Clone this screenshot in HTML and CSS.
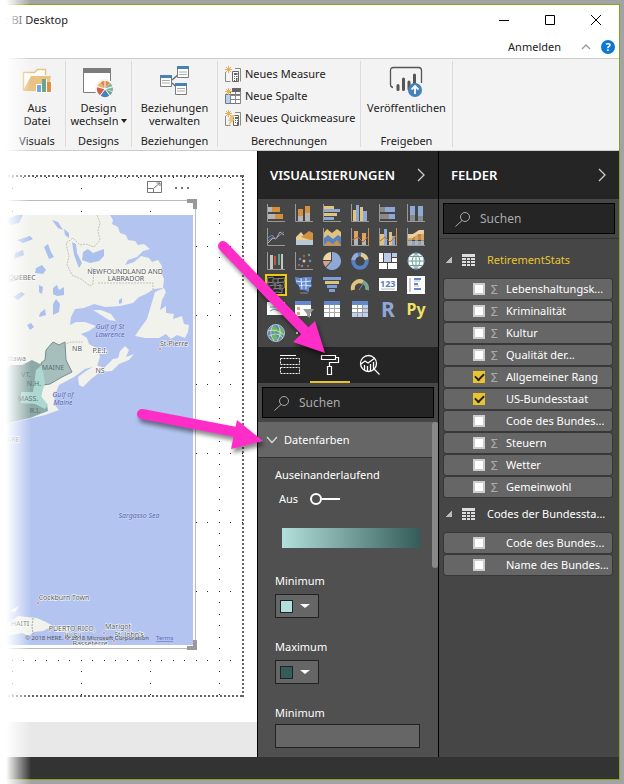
FILE: index.html
```html
<!DOCTYPE html>
<html lang="de">
<head>
<meta charset="utf-8">
<meta name="viewport" content="width=device-width, initial-scale=1">
<title>Power BI Desktop</title>
<link rel="stylesheet" href="styles.css">
</head>
<body>
<div class="app">
  <header class="titlebar">
    <span class="app-name">r BI Desktop</span>
    <div class="window-buttons">
      <button aria-label="Minimieren"><svg width="12" height="12" viewBox="0 0 12 12"><path d="M1 6.500h10" stroke="#000"/></svg></button>
      <button aria-label="Maximieren"><svg width="12" height="12" viewBox="0 0 12 12"><path d="M1.500 1.500h9v9h-9z" fill="none" stroke="#000"/></svg></button>
      <button aria-label="Schließen"><svg width="12" height="12" viewBox="0 0 12 12"><path d="M1 1l10 10M11 1L1 11" stroke="#000"/></svg></button>
    </div>
  </header>
  <div class="account-bar">
    <a href="#">Anmelden</a>
    <button aria-label="Menüband einklappen"><svg width="10" height="8" viewBox="0 0 10 8"><path d="M1 6l4-4 4 4" fill="none" stroke="#999" stroke-width="1.300"/></svg></button>
    <button class="help" aria-label="Hilfe">?</button>
  </div>

  <nav class="ribbon">
    <section class="group group-visuals">
      <button class="tool">
        <svg width="32" height="32" viewBox="0 0 32 32"><path d="M2.500 24V6.500h11l3-3h8V9" fill="#fff" stroke="#eac282" stroke-width="1.500"/><path d="M2 25L10 10h20l-2 10v5z" fill="#eac282"/><path d="M15 18h6v-5h5v3h5v11H15z" fill="#fff"/><path d="M16 19h4v7h-4z" fill="#7ca6d4"/><path d="M21 13h4v13h-4z" fill="#6aa58e"/><path d="M26 16h4v10h-4z" fill="#e38b45"/></svg>
        <span>Aus<br>Datei</span>
      </button>
      <h2>Visuals</h2>
    </section>
    <section class="group group-designs">
      <button class="tool">
        <svg width="32" height="32" viewBox="0 0 32 32"><path d="M1.500 3.500h27v23h-27z" fill="#fff" stroke="#7c7c7c"/><path d="M1 2h28v5H1z" fill="#7c7c7c"/><circle cx="23" cy="23" r="10" fill="#f3f3f3"/><path d="M23 23L18.300 16.500A8 8 0 0 1 27.700 16.500z" fill="#e38b45"/><path d="M23 23L28 16.800A8 8 0 0 1 30.600 25.500z" fill="#82b5a0"/><path d="M23 23L30.300 26.300A8 8 0 0 1 27.700 29.500z" fill="#6aa58e"/><path d="M23 23L27.700 29.500A8 8 0 0 1 18.300 29.500z" fill="#4681ba"/><path d="M23 23L18 29.200A8 8 0 0 1 15.400 20.500z" fill="#d75b3f"/><path d="M23 23L15.600 20A8 8 0 0 1 18.300 16.500z" fill="#e9b573"/><path d="M23 23V14M23 23l8.500-2.500M23 23l5.300 7.300M23 23l-5.300 7.300M23 23l-8.500-2.500" stroke="#fff"/></svg>
        <span>Design<br>wechseln<i class="caret"></i></span>
      </button>
      <h2>Designs</h2>
    </section>
    <section class="group group-relations">
      <button class="tool">
        <svg width="32" height="32" viewBox="0 0 32 32"><path d="M13 14l7-6M13 17l7 6" stroke="#6b6b6b" stroke-width="1.500"/><g fill="#fff" stroke="#7c7c7c"><path d="M18.500 .5h11v11h-11zM1.500 9.500h11v11h-11zM16.500 17.500h11v11h-11z"/></g><path d="M18 0h12v3H18zM1 9h12v3H1zM16 17h12v3H16z" fill="#4681ba"/><path d="M20 6h8M20 8.500h8M3 14.500h8M3 17h8M18 22.500h8M18 25h8" stroke="#aaa"/></svg>
        <span>Beziehungen<br>verwalten</span>
      </button>
      <h2>Beziehungen</h2>
    </section>
    <section class="group group-calc">
      <div class="small-tools">
        <button><svg width="16" height="16" viewBox="0 0 16 16"><path d="M.5 6v9.500h5M10 2.500h5.500v13" fill="none" stroke="#8a8a8a"/><path d="M7.500 5.500h6v10h-6z" fill="#fff" stroke="#666"/><path d="M9 7h3.500v2H9zM9 10h1v1H9zM11 10h1.500v1H11zM9 12h1v1H9zM11 12h1.500v3H11zM9 14h1v1H9z" fill="#666"/><path d="M3.500 0v7M0 3.500h7M1 1l5 5M6 1L1 6" stroke="#e8b056"/></svg><span>Neues Measure</span></button>
        <button><svg width="16" height="16" viewBox="0 0 16 16"><path d="M.5 6.500h15v9H.5z" fill="#fff" stroke="#777"/><path d="M1 7h4v8H1z" fill="#b5d2ee"/><path d="M7 0h9v4H7z" fill="#666"/><path d="M5.500 4v11M10.500 4v11M15.500 3v12M5 7.500h10M5 11.500h10" stroke="#888"/><path d="M3.500 0v7M0 3.500h7M1 1l5 5M6 1L1 6" stroke="#e8b056"/></svg><span>Neue Spalte</span></button>
        <button><svg width="16" height="16" viewBox="0 0 16 16"><path d="M.5 6v9.500h5M10 2.500h5.500v13" fill="none" stroke="#8a8a8a"/><path d="M8.500 5.500h5v10h-5z" fill="#fff" stroke="#666"/><path d="M10 7h3v2h-3zM10 10h1v1h-1zM12 10h1v1h-1zM10 12h1v1h-1zM12 12h1v3h-1z" fill="#666"/><path d="M6 5h4L8 9h2l-7 7 2-5H3z" fill="#eac282"/><path d="M3.500 0v7M0 3.500h7M1 1l5 5M6 1L1 6" stroke="#e8b056"/></svg><span>Neues Quickmeasure</span></button>
      </div>
      <h2>Berechnungen</h2>
    </section>
    <section class="group group-share">
      <button class="tool">
        <svg width="34" height="32" viewBox="0 0 34 32"><path d="M4 21.500Q1.500 21 1.500 18.500V4.500Q1.500 1.500 4.500 1.500h25Q32.500 1.500 32.500 4.500V17" fill="none" stroke="#555" stroke-width="1.300"/><path d="M9 19.500v4M14.500 13v10.500M20 16v7M25.500 9v10" stroke="#555" stroke-width="3" stroke-linecap="round"/><circle cx="26" cy="24" r="7" fill="#4681ba"/><path d="M26 28v-8M22.500 23.500l3.500-3.500 3.500 3.500" fill="none" stroke="#fff" stroke-width="1.800"/></svg>
        <span>Veröffentlichen</span>
      </button>
      <h2>Freigeben</h2>
    </section>
  </nav>

  <main class="workspace">
    <section class="canvas">
      <div class="report">
        <div class="page">
          <svg class="page-grid" width="100%" height="100%" aria-hidden="true">
            <defs><pattern id="dots" x="12" y="2" width="69" height="69" patternUnits="userSpaceOnUse"><path d="M0 0h1v1h-1zM0 11h1v1h-1zM0 23h1v1h-1zM0 34h1v1h-1zM0 46h1v1h-1zM0 57h1v1h-1zM11 0h1v1h-1zM23 0h1v1h-1zM34 0h1v1h-1zM46 0h1v1h-1zM57 0h1v1h-1z" fill="#222"/></pattern></defs>
            <rect width="100%" height="100%" fill="url(#dots)"/>
          </svg>
          <div class="visual-tools">
            <button aria-label="Fokusmodus"><svg width="15" height="13" viewBox="0 0 15 13"><path d="M.5 .5h14v11H.5zM.5 7.500h6v4M7 7l6-5M9.500 2H13v3" fill="none" stroke="#777"/></svg></button>
            <button aria-label="Weitere Optionen"><svg width="16" height="4" viewBox="0 0 16 4"><path d="M1 1h2v2H1zM7 1h2v2H7zM13 1h2v2h-2z" fill="#777"/></svg></button>
          </div>
          <div class="visual">
            <svg class="map" viewBox="0 0 193 430" role="img" aria-label="Karte">
              <path fill="#b3c4f0" d="M0 0h193v430H0z"/>
              <g fill="#f1f2ec">
                <path d="M0 0H110l3 5-1 4 6 3 2 6 6 2 2 5 7 1 3 4 6-1 6 5-7 2-6 6-9 3-3 5 9-3 7-6 8 2 3 4 6-2 4 6-1 6 3 7-1 9-9 1-8 5-7 3-6 6-13 3-15 1-11-3-10 4-9 1-4 8-1 8 6-3 9 0 11 4-7 5-8 3 6 4 2 6 9 5 2 8-3 9-12 3-11 8-15 8-4 10-1 9 5 6-14 5-34 8z"/>
                <path d="M79 170l-1-8 8-6 10-6 8 3 9-9 5-1 2-7 5-5 4 4-3 7 8-3-5 6-10 4-7 7-12 1-10 8-7 7z"/>
                <path d="M155 77l9-4 2 4-4 8-2 10 6-4 0 7 8 1-1 5 9-3 2 8 5 1-1 7-3 6-8-3-6 4-5-5-7 4-14 0-10-2 4-6 8-11zM93 95l8 0 10 4 5 7-7-1zM91 134l6 5 8 0 3-4-6 1-6-4zM0 409l12-3 6-5 19 2 9 4 7 4-10 5-9 1-5 4-7-3-15 3-7-4zM55 412h13l3 4-15 1zM9 396l10-5-4 6z"/>
              </g>
              <g fill="#abc0ed">
                <path d="M52 5l6 2 5 8-5-2zM64 14l5 4 0 5-4-3zM17 25l13-4 3 3-10 4zM44 32l4-3 3 8 3 5-5 2zM15 38l8-3 1 5-10 4zM36 53l6-3 4 5-3 4-8-1zM83 37l5-3 5 4 11-4 0 7-5 5-9 2-8-3zM90 52l8 4-4 3zM72 27l4 2 1 9 5 10-3 5-5-13zM53 73l4-3 2 5 5-3 0 8-7 1-4-2zM53 89l3-5 4 5-1 8-6 3zM39 70l4 2-1 7-3-2zM13 82l8-5 4 2-7 6zM40 98l5-4 1 6-7 2zM27 110l4-2 3 4-4 3zM119 85l3-2 0 5-3 1zM5 5l12-5h6l-4 8-9 2zM7 65l9-3 4 2-10 4z"/>
              </g>
              <path fill="#a6bfbd" stroke="#778c8b" d="M45 145l1-10 7-8 6 3 6-3 1 18 6 12-10 5-12 7-7 1-2-22z"/>
              <path fill="#8ca9a7" d="M10 150h12l10-5 10 5 0 13 1 9-3 14 7 3 1 7-18 7-30 7v-45z"/>
              <path fill="#acd8d1" d="M36 155l6-5 3 18-4 13 7 9-3 4-10-5-14-1v-11h12z"/>
              <g fill="none" stroke="#b2ad9d" stroke-width=".7" stroke-dasharray="2 1"><path d="M97 0l3 8-2 8 2 9-6 7-8-3-6 1-7-7-7 5 3 13-2 9 5 10 9 4 9 7 3-2 1-17M98 68h55v7M59 137l4-7 8-3 12 0"/><path stroke="#8e8b81" d="M33 403l-1 8 1 8"/></g>
              <g class="places">
                <text x="125" y="59">NEWFOUNDLAND AND</text><text x="126" y="66">LABRADOR</text>
                <text x="22" y="65">QUEBEC</text><text x="77" y="136">NB</text><text x="100" y="138">P.E.I.</text><text x="100" y="158">NS</text>
              </g>
              <g class="states">
                <text x="53" y="155">MAINE</text><text x="26" y="162">VT.</text><text x="34" y="171">N.H.</text><text x="28" y="186">MASS.</text><text x="35" y="198">R.I.</text></g>
              <g class="places"><text x="10" y="227">WARE</text><text x="20" y="411">HAITI</text><text x="72" y="416">PUERTO RICO,</text><text x="73" y="423">(U.S.)</text>
              </g>
              <g class="towns"><text x="174" y="131">St-Pierre</text><text x="14" y="146">Ottawa</text><text x="64" y="385">Cockburn Town</text><text x="118" y="414">Marigot</text><text x="129" y="422">St. John's</text><text x="90" y="431">Basseterre</text></g>
              <g class="waters"><text x="110" y="114">Gulf of St</text><text x="110" y="122">Lawrence</text><text x="63" y="182">Gulf of</text><text x="63" y="190">Maine</text><text x="139" y="303">Sargasso Sea</text></g>
              <path fill="#d0472d" stroke="#fff" stroke-width=".5" d="M159 133h2v2h-2zM37 387h2v2h-2zM103 417h2v2h-2zM113 425h2v2h-2zM106 423h2v2h-2z"/>
              <g class="credits"><text x="25" y="425">© 2018 HERE, © 2018 Microsoft Corporation</text><text x="156" y="425" text-decoration="underline" fill="#6a6ab8">Terms</text></g>
            </svg>
            <i class="handle handle-top"></i><i class="handle handle-mid"></i><i class="handle handle-bottom"></i>
          </div>
        </div>
      </div>
      <div class="page-tabs"></div>
    </section>

    <aside class="panel">
      <header class="panel-head"><h1>VISUALISIERUNGEN</h1><button aria-label="Einklappen"><svg width="8" height="14" viewBox="0 0 8 14"><path d="M1 1l6 6-6 6" fill="none" stroke="#ccc" stroke-width="1.300"/></svg></button></header>
      <div class="gallery">
        <button aria-label="Gestapelte Balken"><svg viewBox="0 0 18 18"><path d="M1 3h4v5H1zM1 10h7v5H1z" fill="#b5b5b5"/><path d="M5 3h8v5H5zM8 10h8v5H8z" fill="#d3913f"/><path class="axis" d="M.5 0v17.500H18"/></svg></button>
        <button aria-label="Gestapelte Säulen"><svg viewBox="0 0 18 18"><path d="M3 12h5v5H3zM10 9h5v8h-5z" fill="#b5b5b5"/><path d="M3 5h5v7H3zM10 2h5v7h-5z" fill="#d3913f"/><path class="axis" d="M.5 0v17.500H18"/></svg></button>
        <button aria-label="Gruppierte Balken"><svg viewBox="0 0 18 18"><path d="M1 2h10v3H1zM1 9h13v3H1z" fill="#dfc57b"/><path d="M1 5h16v3H1zM1 13h10v3H1z" fill="#8fa9d6"/><path class="axis" d="M.5 0v17.500H18"/></svg></button>
        <button aria-label="Gruppierte Säulen"><svg viewBox="0 0 18 18"><path d="M2 6h3v11H2zM9 3h3v14H9z" fill="#dfc57b"/><path d="M5 1h3v16H5zM12 7h4v10h-4z" fill="#8fa9d6"/><path class="axis" d="M.5 0v17.500H18"/></svg></button>
        <button aria-label="100 % Balken"><svg viewBox="0 0 18 18"><path d="M1 3h5v5H1zM1 10h9v5H1z" fill="#8a8a8a"/><path d="M6 3h10v5H6zM10 10h6v5h-6z" fill="#8fa9d6"/><path class="axis" d="M.5 0v17.500H18"/></svg></button>
        <button aria-label="100 % Säulen"><svg viewBox="0 0 18 18"><path d="M3 11h5v6H3zM11 12h5v5h-5z" fill="#8a8a8a"/><path d="M3 2h5v9H3zM11 2h5v10h-5z" fill="#8fa9d6"/><path class="axis" d="M.5 0v17.500H18"/></svg></button>

        <button aria-label="Linien"><svg viewBox="0 0 18 18"><path d="M1 15l5-5 3 1 4-7 4 3" fill="none" stroke="#d8aa96"/><path d="M1 10l4-3 4 4 4-4 4-3M1 13l6-5" fill="none" stroke="#6289ce"/><path class="axis" d="M.5 0v17.500H18"/></svg></button>
        <button aria-label="Flächen"><svg viewBox="0 0 18 18"><path d="M1 17V9l5-5 5 6 6-3v10z" fill="#e9cf93"/><path d="M6 9l8-6 4 2v8z" fill="#d3913f"/><path d="M1 12l17 0v5H1z" fill="#b6c9d4"/></svg></button>
        <button aria-label="Gestapelte Flächen"><svg viewBox="0 0 18 18"><path d="M0 6l4-5 5 4 5-4 4 3v13H0z" fill="#e0c47c"/><path d="M0 11l5-4 5 4 5-4 3 2v8H0z" fill="#5681c5"/><path d="M1 17l4-4 5 3 4-4 4 5z" fill="#d3913f"/><path class="axis" d="M.5 0v17.500H18"/></svg></button>
        <button aria-label="Linien und gestapelte Säulen"><svg viewBox="0 0 18 18"><path d="M3 9h4v8H3zM11 11h4v6h-4z" fill="#b5b5b5"/><path d="M3 3h4v8H3zM11 5h4v7h-4z" fill="#e1a45e"/><path d="M1 12l6-3 5 5 6-6" fill="none" stroke="#bd673d"/><path class="axis" d="M.5 0v17.500H18"/><path d="M17.500 0v17" stroke="#d3913f"/></svg></button>
        <button aria-label="Linien und gruppierte Säulen"><svg viewBox="0 0 18 18"><path d="M1 6h4v11H1zM10 4h3v13h-3z" fill="#dfc57b"/><path d="M5 1h3v16H5zM13 8h3v9h-3z" fill="#8fa9d6"/><path d="M1 13l5-4 5 5 6-6" fill="none" stroke="#bd673d"/><path class="axis" d="M.5 0v17.500H18"/><path d="M17.500 0v17" stroke="#d3913f"/></svg></button>
        <button aria-label="Menüband"><svg viewBox="0 0 18 18"><path d="M1 6h5l6-4h5v4h-5l-6 4H1z" fill="#ecd3a2"/><path d="M1 10h5l6-4h5v6H1z" fill="#c98540"/><path d="M1 13h16v4H1z" fill="#87a3d1"/><path d="M1 6h4v11H1zM8 5h3v12H8zM14 2h3v15h-3z" fill="#e2c891" opacity=".5"/><path class="axis" d="M.5 0v17.500H18"/></svg></button>

        <button aria-label="Wasserfall"><svg viewBox="0 0 18 18"><path d="M3 3h3v14H3zM14 2h2v15h-2z" fill="#c4c4c4"/><path d="M7 4h2v9H7z" fill="#bd5a3c"/><path d="M11 2h2v11h-2z" fill="#62a28c"/><path class="axis" d="M.5 0v17.500H18"/></svg></button>
        <button aria-label="Punkt"><svg viewBox="0 0 18 18"><g fill="#6289ce"><circle cx="5" cy="7" r="1.300"/><circle cx="15" cy="9" r="1.300"/><circle cx="7" cy="14" r="1.300"/></g><g fill="#bd5a3c"><circle cx="9" cy="4" r="1.200"/><circle cx="4" cy="13" r="1.200"/><circle cx="13" cy="14" r="1.200"/></g><circle cx="9" cy="9" r="1.500" fill="#e0c47c"/><circle cx="14" cy="3" r="1.200" fill="#62a28c"/><path class="axis" d="M.5 0v17.500H18"/></svg></button>
        <button aria-label="Kreis"><svg viewBox="0 0 18 18"><path d="M9 9V0a9 9 0 1 1-6 15.700z" fill="#8fa9d6"/><path d="M8 8V0A9 9 0 0 0 0 8z" fill="#ead7a3"/><path d="M8 9H0a9 9 0 0 0 2.500 6z" fill="#dba08d"/></svg></button>
        <button aria-label="Ring"><svg viewBox="0 0 18 18"><circle cx="9" cy="9" r="6.800" fill="none" stroke="#5580c2" stroke-width="4"/><path d="M10 2.500a6.800 6.800 0 0 1 5.500 5" fill="none" stroke="#e5cb84" stroke-width="4"/><path d="M2.200 8A6.800 6.800 0 0 1 7 2.500" fill="none" stroke="#94acd8" stroke-width="4"/></svg></button>
        <button aria-label="Treemap"><svg viewBox="0 0 18 18"><path d="M0 1h18v16H0z" fill="#fff"/><path d="M5 1h8v9H5zM13 1h5v5h-5z" fill="#b9c9e7"/><path d="M4.500 1v10M12.500 1v10M0 10.500h18M8.500 11v6M13 5.500h5" stroke="#464646"/></svg></button>
        <button aria-label="Karte"><svg viewBox="0 0 18 18"><circle cx="9" cy="9" r="8" fill="#fff" stroke="#8fb8d0"/><path d="M1 9h16M3 4.500h12M3 13.500h12M9 1v16M9 1Q1 9 9 17M9 1q8 8 0 16" fill="none" stroke="#6da096"/></svg></button>

        <button class="selected" aria-label="Flächenkartogramm" aria-pressed="true"><svg viewBox="0 0 18 18"><path d="M0 2l6-1 1 2 11-1-1 5 1 4-3 2v4l-5-1-4 1-1-3-5-2 1-4z" fill="#2b2b2b" stroke="#888"/><path d="M0 6l8 1 9-1M2 10l5-1 9 1M6 13l9-1M6 3v3M11 3v5M8 7v6M13 8v6" fill="none" stroke="#888"/></svg></button>
        <button aria-label="Formzuordnung"><svg viewBox="0 0 18 18"><path d="M0 1l6 1 3-1 8 0-1 6 1 3-3 2v4l-5-2-4 0-1-4-3-3z" fill="#6289ce"/><path d="M1 5l6 1 9-1M4 10l5-1 7 1M6 2l1 11M11 2v11" fill="none" stroke="#dce5f7"/><path d="M5 17h8" stroke="#888"/></svg></button>
        <button aria-label="Trichter"><svg viewBox="0 0 18 18"><path d="M0 1h18v3H0zM4 9h10v3H4zM6 13h6v3H6z" fill="#7f9fd2"/><path d="M2 5h14v3H2z" fill="#dfc57b"/></svg></button>
        <button aria-label="Messgerät"><svg viewBox="0 0 18 18"><path d="M2 14a7 7 0 0 1 10-8" fill="none" stroke="#dfc57b" stroke-width="4"/><path d="M12 6a7 7 0 0 1 4 8" fill="none" stroke="#7aa795" stroke-width="4"/><path d="M8 14l4-6" stroke="#888"/></svg></button>
        <button aria-label="Zahlenkarte"><svg viewBox="0 0 18 18"><path d="M0 2h18v13H0z" fill="#fff"/><text x="1" y="11" font-size="9" font-weight="bold" fill="#5781b8">123</text><path d="M2 13h14" stroke="#bbb"/></svg></button>
        <button aria-label="Mehrzeilige Karte"><svg viewBox="0 0 18 18"><path d="M0 0h18v18H0z" fill="#fff"/><path d="M3 2v14" stroke="#ccc" stroke-width="2"/><path d="M7 3h7M7 8h4M7 13h7" stroke="#6289ce" stroke-width="2"/><path d="M7 5h6M7 10h5" stroke="#bbb"/></svg></button>

        <button aria-label="KPI"><svg viewBox="0 0 18 18"><path d="M0 2h18v13H0z" fill="#fff"/><path d="M3 7h8M3 11l4-2 5 2" stroke="#62a28c" fill="none"/></svg></button>
        <button aria-label="Datenschnitt"><svg viewBox="0 0 18 18"><path d="M0 1h16v15H0z" fill="#fff"/><path d="M0 1h16v4H0z" fill="#6289ce"/><path d="M2 7h3v3H2zM2 12h3v3H2z" fill="#e4a575"/><path d="M8 9h11l-4 5v4l-3-2v-2z" fill="#999"/></svg></button>
        <button aria-label="Tabelle"><svg viewBox="0 0 18 18"><path d="M1 1h16v16H1z" fill="#fff"/><path d="M1 1h16v4H1z" fill="#6289ce"/><path d="M6.500 5v12M11.500 5v12M1 8.500h16M1 12.500h16" stroke="#aaa"/></svg></button>
        <button aria-label="Matrix"><svg viewBox="0 0 18 18"><path d="M1 1h16v16H1z" fill="#fff"/><path d="M1 1h16v4H1z" fill="#6289ce"/><path d="M12 5h5v12h-5zM1 13h16v4H1z" fill="#bed0ea"/><path d="M6.500 5v12M11.500 5v12M1 8.500h16M1 12.500h16" stroke="#999"/></svg></button>
        <button class="letters r-visual">R</button>
        <button class="letters py-visual">Py</button>
        <button aria-label="ArcGIS"><svg viewBox="0 0 18 18"><circle cx="9" cy="9" r="8.500" fill="#5d86b0" stroke="#b9c3c5"/><path d="M3 5l5-3 3 3-4 5zM10 7l4-4 3 5-4 6zM5 11l4-1 2 6-5 0z" fill="#69b95d"/><path d="M1 7q8-3 16 4M2 12q8-5 14 2M6 1q-5 8 1 16M11 1q5 8-1 16" stroke="#dae2e9" stroke-width=".8" fill="none"/></svg></button>
        <button class="more" aria-label="Weitere"><svg viewBox="0 0 18 18"><path d="M1 8h2v2H1zM7 8h2v2H7zM13 8h2v2h-2z" fill="#ccc"/></svg></button>
      </div>
      <div class="mode-tabs">
        <button aria-label="Felder"><svg width="22" height="22" viewBox="0 0 22 22"><path d="M1 1.500h16" stroke="#fff"/><path d="M1.500 4.500h19v6h-19zM1.500 13.500h19v6h-19z" fill="none" stroke="#fff" stroke-dasharray="2 1"/></svg></button>
        <button class="active" aria-label="Format"><svg width="22" height="22" viewBox="0 0 22 22"><path d="M2.500 1.500h14v4h-14zM16.500 3.500h3v5h-9v4M8.500 12.500h4v8h-4z" fill="none" stroke="#fff" stroke-width="1.200"/></svg></button>
        <button aria-label="Analyse"><svg width="22" height="22" viewBox="0 0 22 22"><circle cx="9.500" cy="9.500" r="8" fill="none" stroke="#fff" stroke-width="1.300"/><path d="M2 10l4-3 3 2 7-5M5.500 11v5M8.500 12v5M11.500 10v7M14.500 8v7M15 15l5.500 5.500" fill="none" stroke="#fff" stroke-width="1.300"/></svg></button>
      </div>
      <label class="search"><svg width="16" height="16" viewBox="0 0 16 16"><circle cx="10" cy="6" r="4.500" fill="none" stroke="#aaa"/><path d="M7 9.500L.5 15.500" stroke="#aaa"/></svg><input type="text" placeholder="Suchen" aria-label="Suchen"></label>
      <div class="format">
        <button class="section-head"><svg width="12" height="8" viewBox="0 0 12 8"><path d="M1 1l5 5.500L11 1" fill="none" stroke="#ddd" stroke-width="1.200"/></svg>Datenfarben</button>
        <div class="settings">
          <h3>Auseinanderlaufend</h3>
          <label class="switch">Aus<input type="checkbox" role="switch"></label>
          <div class="gradient"></div>
          <h3>Minimum</h3>
          <button class="color-pick" aria-label="Minimumfarbe"><i class="swatch swatch-min"></i><i class="caret"></i></button>
          <h3>Maximum</h3>
          <button class="color-pick" aria-label="Maximumfarbe"><i class="swatch swatch-max"></i><i class="caret"></i></button>
          <h3><label for="min-value">Minimum</label></h3>
          <input class="value" id="min-value" type="text">
        </div>
        <i class="scroll-thumb"></i>
      </div>
    </aside>

    <aside class="panel">
      <header class="panel-head"><h1>FELDER</h1><button aria-label="Einklappen"><svg width="8" height="14" viewBox="0 0 8 14"><path d="M1 1l6 6-6 6" fill="none" stroke="#ccc" stroke-width="1.300"/></svg></button></header>
      <label class="search"><svg width="16" height="16" viewBox="0 0 16 16"><circle cx="10" cy="6" r="4.500" fill="none" stroke="#aaa"/><path d="M7 9.500L.5 15.500" stroke="#aaa"/></svg><input type="text" placeholder="Suchen" aria-label="Suchen"></label>
      <div class="fields">
        <button class="table-name used"><i class="expander"></i><svg width="13" height="12" viewBox="0 0 13 12"><path d="M0 0h13v12H0z" fill="#ddd"/><path d="M0 3.500h13M0 6.500h13M0 9.500h13M4.500 3v9M8.500 3v9" stroke="#464646"/></svg><span>RetirementStats</span></button>
        <ul>
          <li><label><input type="checkbox"><b>Σ</b><span>Lebenshaltungsk...</span></label></li>
          <li><label><input type="checkbox"><b>Σ</b><span>Kriminalität</span></label></li>
          <li><label><input type="checkbox"><b>Σ</b><span>Kultur</span></label></li>
          <li><label><input type="checkbox"><b>Σ</b><span>Qualität der...</span></label></li>
          <li><label><input type="checkbox" checked><b>Σ</b><span>Allgemeiner Rang</span></label></li>
          <li><label><input type="checkbox" checked><b></b><span>US-Bundesstaat</span></label></li>
          <li><label><input type="checkbox"><b></b><span>Code des Bundes...</span></label></li>
          <li><label><input type="checkbox"><b>Σ</b><span>Steuern</span></label></li>
          <li><label><input type="checkbox"><b>Σ</b><span>Wetter</span></label></li>
          <li><label><input type="checkbox"><b>Σ</b><span>Gemeinwohl</span></label></li>
        </ul>
        <button class="table-name"><i class="expander"></i><svg width="13" height="12" viewBox="0 0 13 12"><path d="M0 0h13v12H0z" fill="#ddd"/><path d="M0 3.500h13M0 6.500h13M0 9.500h13M4.500 3v9M8.500 3v9" stroke="#464646"/></svg><span>Codes der Bundessta...</span></button>
        <ul>
          <li><label><input type="checkbox"><b></b><span>Code des Bundes...</span></label></li>
          <li><label><input type="checkbox"><b></b><span>Name des Bundes...</span></label></li>
        </ul>
      </div>
    </aside>
  </main>
  <footer class="status"></footer>
</div>
<div class="edge-fade"></div>
<svg class="arrows" width="270" height="460" viewBox="0 0 270 460" aria-hidden="true">
  <g fill="#ff2dc8" stroke="none">
    <path d="M223 246l83 86" stroke="#ff2dc8" stroke-width="10" stroke-linecap="round"/><path d="M325 353l-10-32-22 21z"/>
    <path d="M142 414l94 18" stroke="#ff2dc8" stroke-width="10" stroke-linecap="round"/><path d="M263 441l-26-21-6 29z"/>
  </g>
</svg>
</body>
</html>
```
FILE: styles.css
```css
*, *::before, *::after { box-sizing: border-box; }
body {
  margin: 0;
  position: relative;
  min-height: 100vh;
  padding: 4px 4px 4px 0;
  display: flex;
  background: #a3a3a3;
  font: 11px/14px "Noto Sans", "Open Sans", sans-serif;
  color: #222;
}
button { border: 0; padding: 0; margin: 0; background: none; font: inherit; color: inherit; }
h1, h2, h3, ul { margin: 0; padding: 0; font: inherit; list-style: none; }
svg { display: block; flex: none; }
a { color: inherit; text-decoration: none; }

.app {
  flex: 1;
  min-width: 0;
  display: flex;
  flex-direction: column;
  border: 1px solid #83a41d;
  border-left: 0;
  background: #fff;
}
.titlebar { display: flex; align-items: center; justify-content: space-between; height: 30px; padding-left: 4px; }
.window-buttons { display: flex; }
.window-buttons button { width: 46px; height: 30px; display: grid; place-items: center; }
.account-bar { display: flex; align-items: center; justify-content: flex-end; gap: 10px; height: 23px; padding-right: 4px; }
.account-bar a { margin-right: 10px; }
.help { width: 14px; height: 14px; border-radius: 50%; background: #0c77d4; color: #fff; font-weight: bold; }

.ribbon { display: flex; height: 93px; padding-top: 2px; background: #f3f3f3; border: solid #ccc; border-width: 1px 0; }
.group { display: flex; flex-direction: column; justify-content: space-between; align-items: center; height: 86px; padding: 5px 0 0; border-right: 1px solid #dcdcdc; text-align: center; }
.group h2 { line-height: 12px; }
.group-visuals { width: 66px; padding-left: 9px; }
.group-designs { width: 66px; }
.group-relations { width: 86px; }
.group-calc { width: 143px; }
.group-share { width: 92px; }
.tool { display: flex; flex-direction: column; align-items: center; gap: 3px; line-height: 13px; }
.caret { display: inline-block; border: solid transparent; border-width: 4px 3px 0; border-top-color: #222; margin-left: 2px; vertical-align: 2px; }
.small-tools { display: flex; flex-direction: column; align-self: stretch; padding-left: 7px; margin-top: -3px; }
.small-tools button { display: flex; align-items: center; gap: 4px; height: 22px; white-space: nowrap; }

.workspace { flex: 1; display: flex; min-height: 0; }
.canvas { flex: 1; min-width: 0; display: flex; flex-direction: column; }
.report { flex: 1; display: flex; padding: 24px 13px 25px 0; }
.page {
  position: relative;
  flex: 1;
  padding-top: 6px;
  background:
    repeating-linear-gradient(90deg, #666 0 2px, transparent 2px 4px) 0 0 / 100% 2px no-repeat,
    repeating-linear-gradient(90deg, #666 0 2px, transparent 2px 4px) 0 100% / 100% 2px no-repeat,
    repeating-linear-gradient(#666 0 2px, transparent 2px 4px) 100% 0 / 2px 100% no-repeat;
}
.page-grid { position: absolute; inset: 0; }
.visual-tools { position: relative; display: flex; justify-content: flex-end; align-items: center; gap: 12px; height: 13px; padding-right: 54px; }
.visual { position: relative; margin: 6px 48px 0 0; padding: 14px 2px 3px 0; border: solid #bbb; border-width: 1px 1px 1px 0; }
.map { width: 100%; height: auto; font: 7px "Noto Sans", sans-serif; text-anchor: middle; }
.places, .towns { fill: #555; stroke: #fff; stroke-width: 1px; paint-order: stroke; }
.states { fill: #5c6f6d; }
.waters { fill: #5463b3; font-style: italic; stroke: #cbd6f5; stroke-width: 1px; paint-order: stroke; }
.credits { text-anchor: start; font-size: 6px; fill: #555; }
.handle { position: absolute; right: -2px; width: 10px; height: 10px; border: solid #999; border-width: 0 4px 0 0; }
.handle-top { top: -2px; border-top-width: 4px; }
.handle-mid { top: 49%; width: 4px; height: 4px; }
.handle-bottom { bottom: -2px; border-bottom-width: 4px; }
.page-tabs { height: 35px; background: #e8e8e8; }

.panel { width: 181px; flex: none; display: flex; flex-direction: column; border-left: 1px solid #000; background: #464646; color: #fff; }
.panel-head { display: flex; align-items: center; justify-content: space-between; height: 48px; padding: 0 13px 0 12px; background: #252525; }
.panel-head h1 { font-size: 13px; font-weight: 600; }
.gallery { display: grid; grid-template-columns: repeat(6, 28px); grid-auto-rows: 24px; padding: 2px 4px; height: 148px; }
.gallery button { display: grid; place-items: center; }
.gallery svg { width: 18px; height: 18px; overflow: visible; }
.gallery .selected svg { outline: 2px solid #f2c811; background: #222; }
.axis { fill: none; stroke: #999; }
.gallery .letters { font-weight: bold; font-size: 21px; }
.r-visual { color: #8ea6d8; }
.gallery .py-visual { color: #efe265; font-size: 16px; }
.mode-tabs { display: flex; height: 36px; padding-left: 12px; background: #252525; }
.mode-tabs button { width: 40px; display: grid; place-items: center; border: solid transparent; border-width: 2px 0; }
.mode-tabs .active { border-bottom-color: #e8c52d; }
.search { display: flex; align-items: center; gap: 9px; height: 31px; margin: 4px; padding: 0 11px; border: 1px solid #000; background: #252525; font-size: 12px; }
.search input { flex: 1; min-width: 0; border: 0; padding: 0; background: none; font: inherit; color: #fff; outline: 0; }
.search input::placeholder { color: #aaa; opacity: 1; }

.format { position: relative; flex: 1; background: #505050; }
.section-head { display: flex; align-items: center; gap: 6px; width: 100%; height: 36px; padding-left: 8px; background: #666; border-bottom: 1px solid #333; }
.settings { display: flex; flex-direction: column; align-items: flex-start; padding: 9px 18px 0 17px; }
.settings h3 { line-height: 16px; }
.switch { display: flex; align-items: center; gap: 12px; height: 16px; margin: 8px 0 21px 4px; }
.switch input { appearance: none; display: flex; align-items: center; width: 30px; height: 12px; margin: 0; }
.switch input::before { content: ""; width: 12px; height: 12px; border: 2px solid #fff; border-radius: 50%; }
.switch input::after { content: ""; flex: 1; height: 2px; background: #fff; }
.gradient { align-self: stretch; height: 20px; margin: 0 0 25px 7px; background: linear-gradient(90deg, #b3e0dc, #345c58); }
.color-pick { display: flex; align-items: center; gap: 5px; width: 44px; height: 24px; margin: 5px 0 21px; padding-left: 4px; border: 1px solid #222; background: #666; }
.swatch { width: 13px; height: 13px; border: 1px solid #222; }
.swatch-min { background: #b3e0dc; }
.swatch-max { background: #345c58; }
.color-pick .caret { border-top-color: #fff; border-width: 4px 5px 0; }
.value { align-self: stretch; height: 24px; margin-top: 3px; border: 1px solid #222; background: #666; color: #fff; font: inherit; }
.scroll-thumb { position: absolute; top: 0; right: 0; width: 6px; height: 146px; border-radius: 3px; background: #888; }

.fields { border-top: 1px solid #333; padding: 7px 7px 0 5px; }
.table-name { display: flex; align-items: center; width: 100%; height: 28px; white-space: nowrap; }
.table-name.used { color: #e8c52d; }
.table-name svg { margin: 0 12px 0 10px; }
.expander { flex: none; margin-left: 2px; width: 6px; height: 6px; background: linear-gradient(135deg, transparent 45%, #bbb 45%); }
.fields ul { display: grid; gap: 2px; margin: 5px 0 3px; }
.fields label { display: flex; align-items: center; height: 20px; padding-left: 29px; border-radius: 2px; background: #666; outline: 1px solid #383838; white-space: nowrap; }
.fields b { width: 21px; padding-left: 5px; color: #aaa; font: 13px "DejaVu Sans", sans-serif; }
.fields input { appearance: none; flex: none; display: grid; place-items: center; width: 12px; height: 12px; margin: 0; border: 2px solid #ccc; background: #fff; }
.fields input:checked { border-color: #e8c52d; background: #e8c52d; }
.fields input:checked::before { content: ""; width: 9px; height: 6px; margin-bottom: 2px; border: solid #222; border-width: 0 0 2px 2px; transform: rotate(-45deg); }
.status { height: 22px; background: #333; }

.edge-fade { position: absolute; inset: 0 auto 0 0; width: 31px; background: linear-gradient(90deg, #fff 6px, transparent); pointer-events: none; }
.arrows { position: absolute; top: 0; left: 0; overflow: visible; pointer-events: none; filter: drop-shadow(2px 4px 2px rgba(0, 0, 0, .45)); }
```
